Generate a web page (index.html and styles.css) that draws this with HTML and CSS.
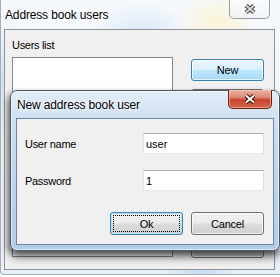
FILE: index.html
```html
<!DOCTYPE html>
<html lang="en">
  <head>
    <meta charset="UTF-8" />
    <title>Address book users</title>
    <link rel="stylesheet" href="styles.css">
  </head>
  <body>
    <div class="window main">
      <div class="titlebar">
        <span class="title">Address book users</span>
        <span class="close close-inactive">
          <svg width="12" height="10" viewBox="0 0 12 10">
            <path d="M2 1.5 L10 8.5 M10 1.5 L2 8.5" stroke="#4a4a4a" stroke-width="4.2" fill="none" />
            <path d="M2 1.5 L10 8.5 M10 1.5 L2 8.5" stroke="#d8d8d8" stroke-width="2" fill="none" />
          </svg>
        </span>
      </div>
      <div class="client main-client">
        <div class="list-col">
          <label class="caption">Users list</label>
          <div class="listbox"></div>
        </div>
        <div class="btn-col">
          <button class="btn btn-hot">New</button>
          <button class="btn"></button>
          <button class="btn btn-last"></button>
        </div>
      </div>

      <!-- modal dialog over the main window -->
      <div class="dialog">
        <div class="titlebar dialog-titlebar">
          <span class="title">New address book user</span>
          <span class="close close-active">
            <svg width="12" height="10" viewBox="0 0 12 10">
              <path d="M2 1.5 L10 8.5 M10 1.5 L2 8.5" stroke="#3b1208" stroke-width="4.2" fill="none" />
              <path d="M2 1.5 L10 8.5 M10 1.5 L2 8.5" stroke="#ffffff" stroke-width="2" fill="none" />
            </svg>
          </span>
        </div>
        <div class="client dialog-client">
          <div class="row">
            <label for="user_name">User name</label>
            <input type="text" id="user_name" value="user" />
          </div>
          <div class="row row-second">
            <label for="password">Password</label>
            <input type="text" id="password" value="1" />
          </div>
          <div class="actions">
            <button class="btn btn-default">Ok</button>
            <button class="btn">Cancel</button>
          </div>
        </div>
      </div>
    </div>
  </body>
</html>
```

FILE: styles.css
```css
body {
  margin: 0;
  font-family: "Liberation Sans", Arial, sans-serif;
  font-size: 11px;
  color: #000;
}
.window {
  position: relative;
  width: 280px;
  height: 274px;
  overflow: hidden;
  border-left: 1px solid #a9adb2;
  border-bottom: 1px solid #a9adb2;
  border-bottom-left-radius: 4px;
  background-color: #eef3f9;
  background-image:
    radial-gradient(ellipse 40px 30px at 215px 22px, rgba(255, 240, 190, 0.6), transparent),
    radial-gradient(ellipse 50px 40px at 140px 40px, rgba(200, 222, 245, 0.7), transparent),
    radial-gradient(ellipse 30px 60px at 0px 80px, rgba(190, 215, 240, 0.7), transparent),
    radial-gradient(ellipse 40px 10px at 200px 272px, rgba(190, 215, 240, 0.8), transparent),
    linear-gradient(#f6f9fc, #e8eff8);
}
.titlebar {
  display: flex;
  align-items: center;
  height: 29px;
  padding-left: 4px;
}
.title {
  font-size: 12px;
  letter-spacing: -0.15px;
  text-shadow: 0 0 5px #fff, 0 0 3px #fff;
}
.close {
  display: flex;
  align-items: center;
  justify-content: center;
  align-self: flex-start;
  margin-left: auto;
  box-sizing: border-box;
  border-radius: 0 0 5px 5px;
}
.close-inactive {
  width: 41px;
  height: 20px;
  margin-top: -1px;
  margin-right: 11px;
  border: 1px solid #9a9ea4;
  border-top: none;
  background: linear-gradient(rgba(255, 255, 255, 0.5), rgba(235, 240, 246, 0.5));
}
.client {
  box-sizing: border-box;
  background: #f0f0f0;
}
.main-client {
  display: flex;
  height: 241px;
  margin: 0 6px 0 3px;
  padding: 9px 0 0 7px;
  border: 1px solid #8f9296;
}
.caption {
  display: block;
  line-height: 13px;
  letter-spacing: -0.3px;
}
.list-col {
  width: 161px;
}
.listbox {
  box-sizing: border-box;
  height: 200px;
  margin-top: 5px;
  background: #fff;
  border: 1px solid #828790;
}
.btn-col {
  display: flex;
  flex-direction: column;
  margin-left: 18px;
  padding-top: 20px;
}
.btn {
  box-sizing: border-box;
  width: 73px;
  height: 22px;
  padding: 0;
  font-family: inherit;
  font-size: 11px;
  letter-spacing: -0.2px;
  color: #000;
  border: 1px solid #707070;
  border-radius: 3px;
  background: linear-gradient(#f2f2f2 0%, #ebebeb 49%, #dddddd 51%, #cfcfcf 100%);
  box-shadow: inset 0 0 0 1px rgba(255, 255, 255, 0.7);
}
.btn + .btn {
  margin-top: 8px;
}
.btn-last {
  margin-top: auto !important;
  margin-bottom: 11px;
}
.btn-hot {
  border-color: #3c7fb1;
  background: linear-gradient(#eaf6fd 0%, #d9f0fc 49%, #bee6fd 51%, #a7d9f5 100%);
}
.btn-default {
  border-color: #3c7fb1;
  box-shadow: inset 0 0 0 1px #b6e1f7;
  outline: 1px dotted #000;
  outline-offset: -4px;
}
.dialog {
  position: absolute;
  left: 9px;
  top: 90px;
  width: 270px;
  height: 161px;
  box-sizing: border-box;
  display: flex;
  flex-direction: column;
  border: 1px solid #4a5866;
  border-radius: 7px;
  background: linear-gradient(#e3edf8 0%, #cddef1 20%, #bcd3ec 60%, #b2cbe8 100%);
  box-shadow: inset 0 0 0 1px rgba(255, 255, 255, 0.6), 0 6px 9px rgba(0, 0, 0, 0.6), -3px 2px 5px rgba(0, 0, 0, 0.25);
}
.dialog-titlebar {
  height: 27px;
  padding-left: 6px;
}
.close-active {
  width: 44px;
  height: 19px;
  margin-top: -1px;
  margin-right: 7px;
  border: 1px solid #6b2013;
  border-top: none;
  background: linear-gradient(#eab2a4 0%, #dd8a76 40%, #c8452b 55%, #d3674d 100%);
  box-shadow: inset 0 0 0 1px rgba(255, 210, 190, 0.5);
}
.dialog-client {
  flex: 1;
  margin: 0 5px 5px 5px;
  padding: 14px 9px 0 8px;
  border: 1px solid #6f87a2;
}
.row {
  display: flex;
  align-items: center;
  justify-content: space-between;
}
.row label {
  letter-spacing: -0.3px;
}
.row-second {
  margin-top: 16px;
}
input {
  box-sizing: border-box;
  width: 121px;
  height: 21px;
  padding: 0 2px;
  font-family: inherit;
  font-size: 11px;
  color: #000;
  background: #fff;
  border: 1px solid #e3e9ef;
  border-top-color: #abadb3;
  border-left-color: #e2e3ea;
  border-right-color: #dbdfe6;
  outline: none;
}
.actions {
  display: flex;
  justify-content: flex-end;
  gap: 8px;
  margin-top: 21px;
}
.actions .btn {
  height: 23px;
  margin-top: 0;
}
```
